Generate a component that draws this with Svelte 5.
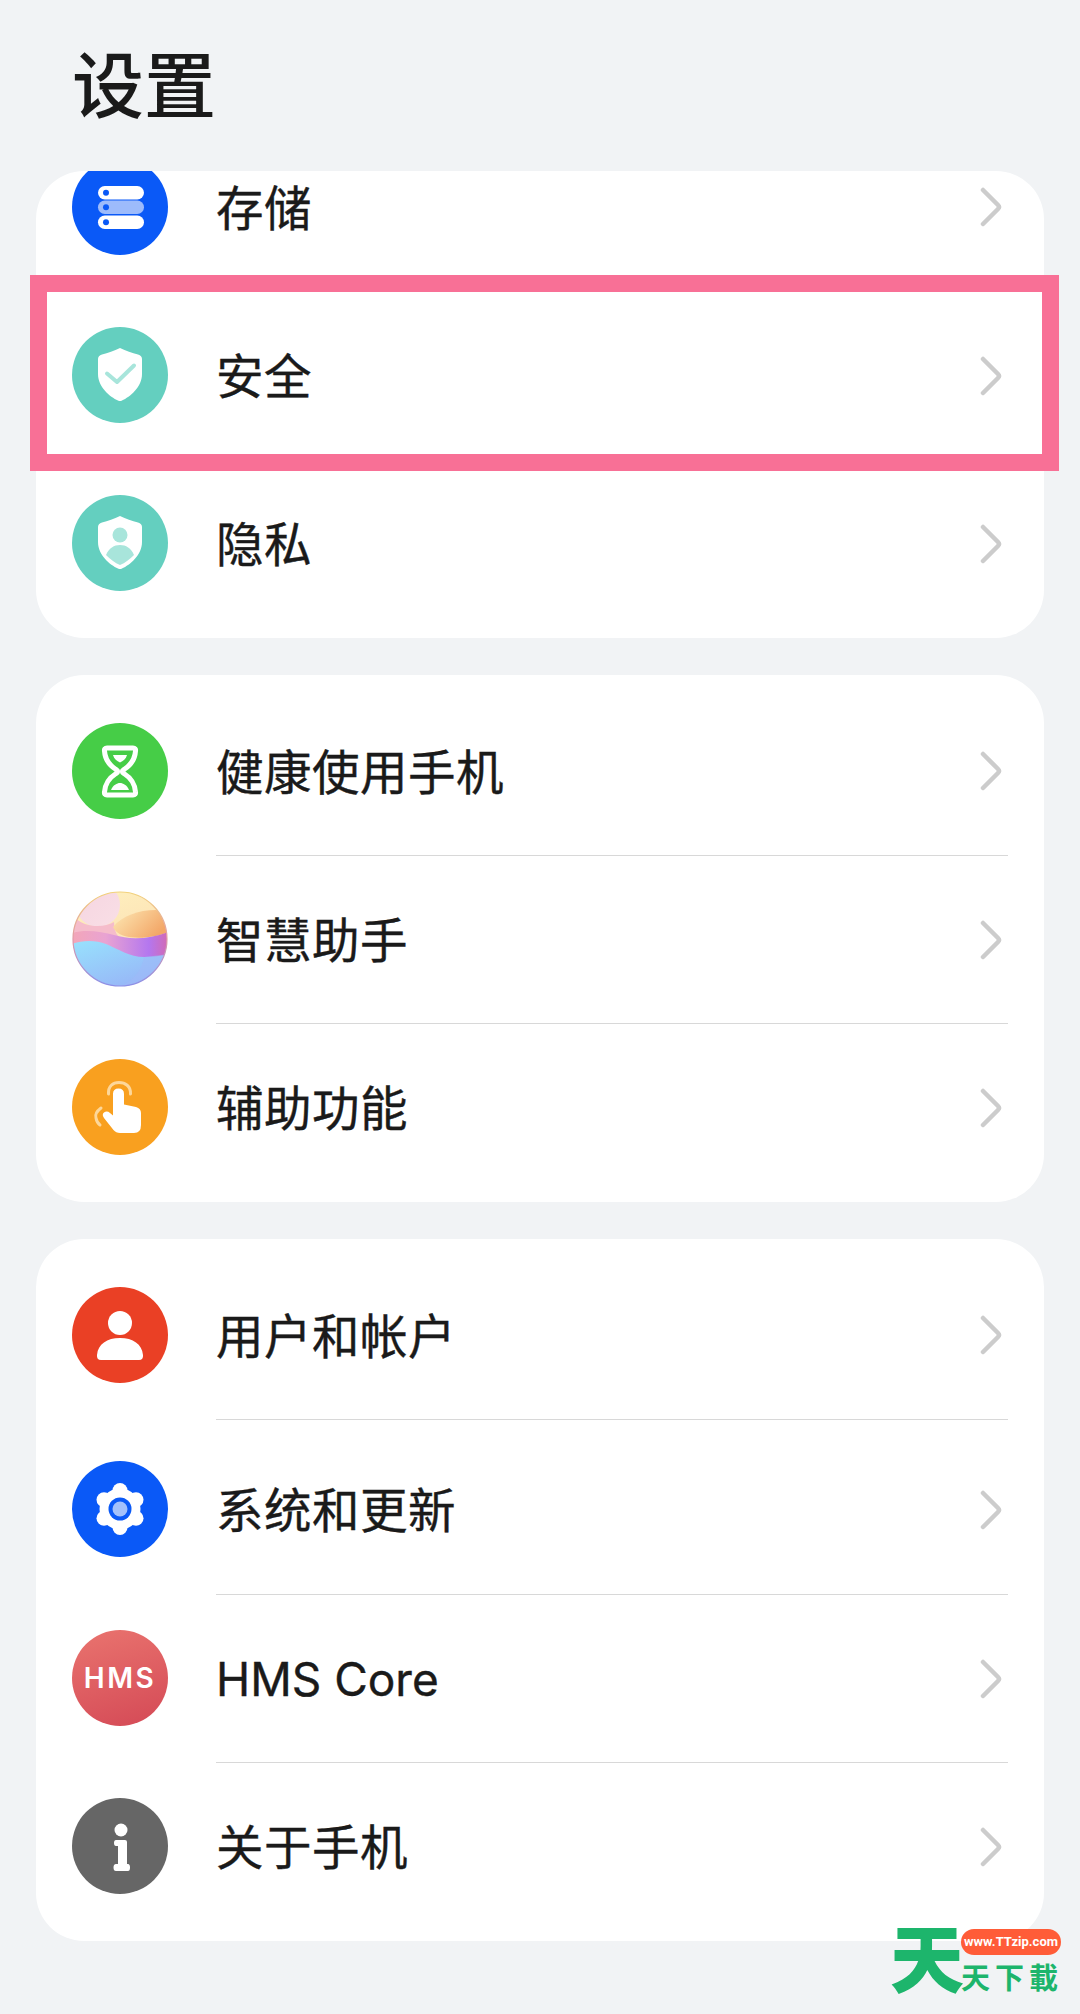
<script>
  const groups = [
    [
      { label: '存储', icon: 'storage' },
      { label: '安全', icon: 'security' },
      { label: '隐私', icon: 'privacy' }
    ],
    [
      { label: '健康使用手机', icon: 'hourglass' },
      { label: '智慧助手', icon: 'assistant' },
      { label: '辅助功能', icon: 'touch' }
    ],
    [
      { label: '用户和帐户', icon: 'user' },
      { label: '系统和更新', icon: 'system', tall: true },
      { label: 'HMS Core', icon: 'hms', latin: true },
      { label: '关于手机', icon: 'info' }
    ]
  ];
</script>

<div class="page">
  <h1>设置</h1>

  {#each groups as rows, i}
    <section class="card" class:clipped={i === 0}>
      {#each rows as row}
        <div class="row" class:tall={row.tall}>
          <svg class="icon" viewBox="0 0 96 96" width="96" height="96">
            {#if row.icon === 'storage'}
              <circle cx="48" cy="48" r="48" fill="#0a59f7" />
              <rect x="26" y="27" width="46" height="13.500" rx="6.750" fill="#fff" />
              <rect x="26" y="41.500" width="46" height="13.500" rx="6.750" fill="#9dbbfb" />
              <rect x="26" y="56.500" width="46" height="13.500" rx="6.750" fill="#fff" />
              <circle cx="34" cy="33.750" r="3" fill="#0a59f7" />
              <circle cx="34" cy="48.250" r="3" fill="#0a59f7" />
              <circle cx="34" cy="63.250" r="3" fill="#0a59f7" />
            {:else if row.icon === 'security'}
              <circle cx="48" cy="48" r="48" fill="#64cfbf" />
              <path d="M48 21C54 24 60 26 66 27.5Q70 28.5 70 32V47C70 60 58 70 50 73.5Q48 74.5 46 73.5C38 70 26 60 26 47V32Q26 28.500 30 27.500C36 26 42 24 48 21Z" fill="#fff" />
              <path d="M35 46.500L45 55L62 38.500" fill="none" stroke="#a8e5db" stroke-width="4" stroke-linecap="round" stroke-linejoin="round" />
            {:else if row.icon === 'privacy'}
              <circle cx="48" cy="48" r="48" fill="#64cfbf" />
              <path d="M48 21C54 24 60 26 66 27.500Q70 28.500 70 32V47C70 60 58 70 50 73.500Q48 74.500 46 73.500C38 70 26 60 26 47V32Q26 28.500 30 27.500C36 26 42 24 48 21Z" fill="#fff" />
              <circle cx="48" cy="40" r="7.500" fill="#a8e5db" />
              <path d="M34 60C37 53 42 50 48 50C54 50 59 53 62 60C58 64 53 68 48 70C43 68 38 64 34 60Z" fill="#a8e5db" />
            {:else if row.icon === 'hourglass'}
              <circle cx="48" cy="48" r="48" fill="#46cd47" />
              <path d="M35 25H61Q64 25 63.500 28C63 36 59 42 52 46.500Q48.500 48.500 52 50.500C59 55 63 61 63.500 69Q64 72 61 72H35Q32 72 32.500 69C33 61 37 55 44 50.500Q47.500 48.500 44 46.500C37 42 33 36 32.500 28Q32 25 35 25Z" fill="none" stroke="#fff" stroke-width="5" stroke-linejoin="round" />
              <path d="M41 32H55C54 36 51 38 48 39.500C45 38 42 36 41 32Z" fill="#fff" />
              <path d="M39 67C41 62 45 60 48 60C51 60 55 62 57 67Z" fill="#fff" />
            {:else if row.icon === 'assistant'}
              <defs>
                <clipPath id="orb"><circle cx="48" cy="48" r="47" /></clipPath>
                <linearGradient id="orbBase" x1="0" y1="0" x2="0.4" y2="1">
                  <stop offset="0" stop-color="#fef2bf" />
                  <stop offset="0.5" stop-color="#fde6b8" />
                </linearGradient>
                <linearGradient id="orbGlow" x1="0" y1="0" x2="1" y2="0.5">
                  <stop offset="0" stop-color="#fdeab6" />
                  <stop offset="1" stop-color="#f3a768" />
                </linearGradient>
                <linearGradient id="orbBand" x1="0" y1="0" x2="1" y2="0">
                  <stop offset="0" stop-color="#f3a6b8" />
                  <stop offset="0.35" stop-color="#e9a3d2" />
                  <stop offset="0.8" stop-color="#b477ef" />
                  <stop offset="1" stop-color="#d269b4" />
                </linearGradient>
                <linearGradient id="orbWater" x1="0" y1="0" x2="0.7" y2="1">
                  <stop offset="0" stop-color="#98e2fd" />
                  <stop offset="1" stop-color="#97b4f7" />
                </linearGradient>
                <linearGradient id="orbLeft" x1="0" y1="0" x2="1" y2="1">
                  <stop offset="0" stop-color="#f5d4e0" />
                  <stop offset="1" stop-color="#f9dfe6" />
                </linearGradient>
                <linearGradient id="orbRim" x1="0.5" y1="0" x2="0.5" y2="1">
                  <stop offset="0" stop-color="#f2d27a" />
                  <stop offset="0.5" stop-color="#e09aa8" />
                  <stop offset="1" stop-color="#8b8fe8" />
                </linearGradient>
              </defs>
              <g clip-path="url(#orb)">
                <rect width="96" height="96" fill="url(#orbBase)" />
                <circle cx="26" cy="14" r="22" fill="url(#orbLeft)" />
                <path d="M0 24C10 36 30 38 42 31C42 44 48 50 60 50L96 44V70H0Z" fill="#f5bccb" />
                <path d="M41 36C50 25 66 19 84 19L96 26V41C84 47 48 52 41 36Z" fill="url(#orbGlow)" />
                <path d="M0 42C14 38 30 41 42 44C58 49 78 48 96 41V72H0Z" fill="url(#orbBand)" />
                <path d="M0 53C10 49 24 49 34 53C46 58 58 66 72 66C82 66 90 65 96 63V96H0Z" fill="url(#orbWater)" />
                <path d="M72 66C70 80 60 90 48 96H96V63Z" fill="#a0baf8" opacity="0.5" />
              </g>
              <circle cx="48" cy="48" r="47" fill="none" stroke="url(#orbRim)" stroke-width="1.200" />
            {:else if row.icon === 'touch'}
              <circle cx="48" cy="48" r="48" fill="#f9a01f" />
              <path d="M36.500 35C36 27 41 23.500 47 23.500C53 23.500 59 27 58.500 35" fill="none" stroke="#fdd79a" stroke-width="3" stroke-linecap="round" />
              <path d="M29 49C25 52 23 56 24 59C24.500 62 26 64.500 28 66" fill="none" stroke="#fdd79a" stroke-width="3" stroke-linecap="round" />
              <path d="M41 35Q41 29.500 46.500 29.500Q52 29.500 52 35V45.500L64 48Q69 49.500 69 54V66Q69 74 62 74H48Q44 74 41.500 71L32 59Q29.500 55.500 32 53.500Q35 51.500 38 54L41 56.500Z" fill="#fff" />
            {:else if row.icon === 'user'}
              <circle cx="48" cy="48" r="48" fill="#ea4025" />
              <circle cx="48" cy="36" r="12" fill="#fff" />
              <path d="M25 68C26 57 35 51 48 51C61 51 70 57 71 68Q71.500 73 67 73H29Q24.500 73 25 68Z" fill="#fff" />
            {:else if row.icon === 'system'}
              <circle cx="48" cy="48" r="48" fill="#0a59f7" />
              <circle cx="48" cy="48" r="20.500" fill="#fff" />
              <circle cx="48" cy="29.500" r="7.500" fill="#fff" />
              <circle cx="64" cy="38.750" r="7.500" fill="#fff" />
              <circle cx="64" cy="57.250" r="7.500" fill="#fff" />
              <circle cx="48" cy="66.500" r="7.500" fill="#fff" />
              <circle cx="32" cy="57.250" r="7.500" fill="#fff" />
              <circle cx="32" cy="38.750" r="7.500" fill="#fff" />
              <circle cx="48" cy="48" r="11.500" fill="#0a59f7" />
              <circle cx="48" cy="48" r="7.500" fill="#a3c1fb" />
            {:else if row.icon === 'hms'}
              <defs>
                <linearGradient id="hmsFill" x1="0.3" y1="0" x2="0.6" y2="1">
                  <stop offset="0" stop-color="#e8716d" />
                  <stop offset="1" stop-color="#d64d58" />
                </linearGradient>
              </defs>
              <circle cx="48" cy="48" r="48" fill="url(#hmsFill)" />
              <text class="hms" x="48" y="58" text-anchor="middle">HMS</text>
            {:else}
              <circle cx="48" cy="48" r="48" fill="#666" />
              <circle cx="49" cy="32" r="6.500" fill="#fff" />
              <path d="M44 42H53Q55 42 55 44V66H56Q58 66 58 69.500Q58 73 56 73H44Q41.500 73 41.500 69.500Q41.500 66 44 66H46V48H44Q42 48 42 45Q42 42 44 42Z" fill="#fff" />
            {/if}
          </svg>
          <div class="body">
            <span class="label" class:latin={row.latin}>{row.label}</span>
            <svg class="chevron" viewBox="0 0 22 40" width="22" height="40">
              <path d="M3 3L18 18Q20 20 18 22L3 37" fill="none" stroke="#ccc" stroke-width="4.500" stroke-linecap="round" stroke-linejoin="round" />
            </svg>
          </div>
        </div>
      {/each}
    </section>
  {/each}

  <div class="highlight"></div>

  <div class="watermark">
    <span class="mark">天</span>
    <span class="pill">www.TTzip.com</span>
    <span class="brand">天下載</span>
  </div>
</div>

<style>
  :global(body) {
    margin: 0;
    background: #f1f3f5;
  }

  .page {
    position: relative;
    height: 2014px;
    overflow: hidden;
    padding: 0 36px;
    box-sizing: border-box;
    font-family: "Inter", "Noto Sans CJK SC", "Noto Sans", sans-serif;
    color: #1a1a1a;
  }

  h1 {
    height: 171px;
    margin: 0 0 0 36px;
    font-size: 72px;
    font-weight: 500;
    line-height: 172px;
  }

  .card {
    padding: 12px 0 11px;
    margin-bottom: 37px;
    background: #fff;
    border-radius: 48px;
    overflow: hidden;
  }

  .card.clipped {
    padding-top: 0;
  }

  .card.clipped .row:first-child {
    margin-top: -48px;
  }

  .row {
    display: flex;
    align-items: center;
    gap: 48px;
    height: 168px;
    padding: 0 36px;
  }

  .row.tall {
    height: 175px;
  }

  .row.tall .icon,
  .row.tall .label,
  .row.tall .chevron {
    margin-top: 5px;
  }

  .icon {
    flex: none;
  }

  .body {
    flex: 1;
    align-self: stretch;
    display: flex;
    align-items: center;
    justify-content: space-between;
    padding-right: 6px;
  }

  .row + .row .body {
    border-top: 1.5px solid #d8d8d8;
  }

  .label {
    position: relative;
    top: -2px;
    font-size: 47.500px;
    font-weight: 400;
    letter-spacing: 0.500px;
    -webkit-text-stroke: 0.4px #1a1a1a;
  }

  .label.latin {
    top: 0;
    font-size: 46px;
    letter-spacing: 0;
  }

  .hms {
    font-family: "Inter", "Liberation Sans", sans-serif;
    font-size: 28px;
    font-weight: 600;
    letter-spacing: 2.500px;
    fill: #fff;
  }

  .highlight {
    position: absolute;
    left: 30px;
    top: 275px;
    width: 1029px;
    height: 196px;
    box-sizing: border-box;
    border: 17px solid #f87096;
  }

  .watermark {
    position: absolute;
    left: 890px;
    top: 1920px;
    width: 175px;
    height: 80px;
  }

  .mark {
    position: absolute;
    left: 0;
    top: -15px;
    font-family: "Noto Sans CJK SC", sans-serif;
    font-size: 74px;
    line-height: 100px;
    font-weight: 900;
    color: #1db56c;
  }

  .pill {
    position: absolute;
    left: 71px;
    top: 9px;
    width: 100px;
    height: 26px;
    border-radius: 13px;
    background: #ff5c38;
    color: #fff;
    font-family: "Roboto", sans-serif;
    font-size: 13px;
    font-weight: 700;
    line-height: 26px;
    text-align: center;
  }

  .brand {
    position: absolute;
    left: 71px;
    top: 37px;
    font-family: "Noto Sans CJK TC", sans-serif;
    font-size: 29px;
    line-height: 38px;
    font-weight: 700;
    letter-spacing: 5px;
    color: #1db56c;
    white-space: nowrap;
  }
</style>
